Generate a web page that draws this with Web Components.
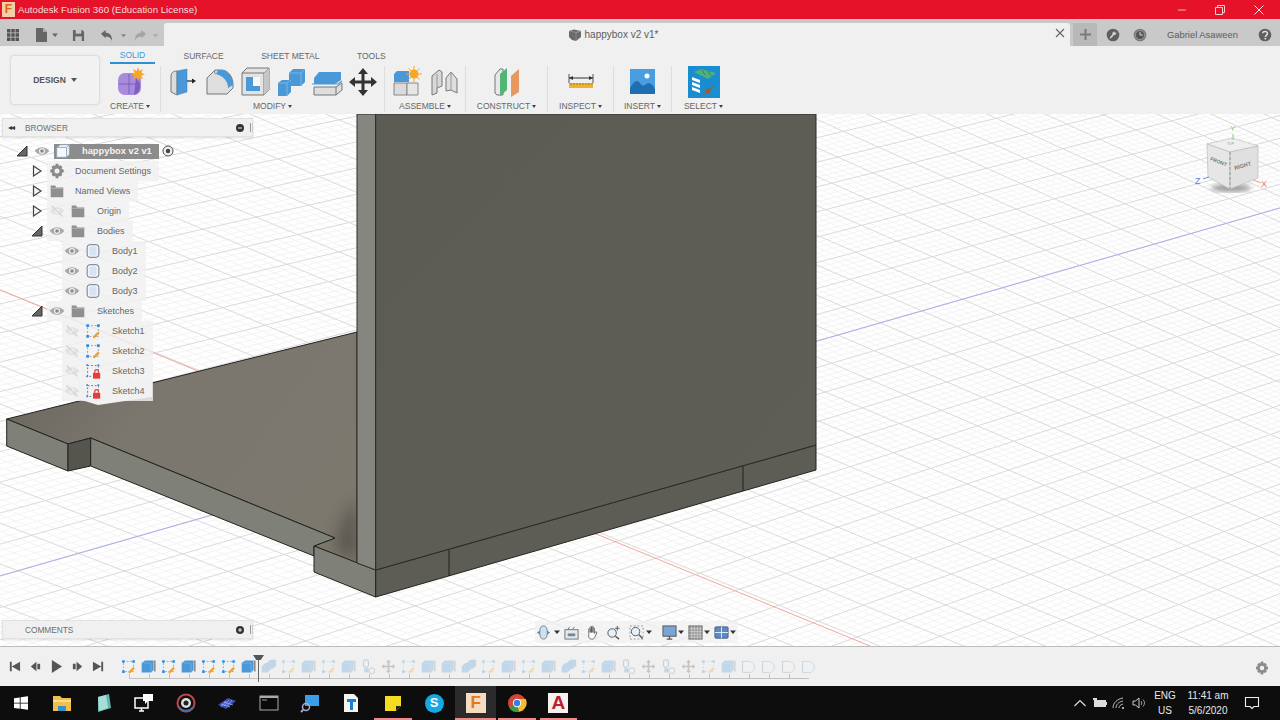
<!DOCTYPE html>
<html>
<head>
<meta charset="utf-8">
<title>Autodesk Fusion 360</title>
<style>
html, body { margin: 0; padding: 0; width: 1280px; height: 720px; overflow: hidden; font-family: "Liberation Sans", Arial, sans-serif; }
body { display: flex; flex-direction: column; }
</style>
</head>
<body>
<title-bar>Autodesk Fusion 360 (Education License)</title-bar>
<app-bar doc="happybox v2 v1*" user="Gabriel Asaween"></app-bar>
<ribbon-bar>
    <tool-group label="CREATE" width="51" pad="10"><ui-icon name="create" size="32"></ui-icon></tool-group>
    <tool-group label="MODIFY" width="224">
        <ui-icon name="press" size="32"></ui-icon><ui-icon name="fillet" size="32"></ui-icon><ui-icon name="shell" size="32"></ui-icon>
        <ui-icon name="combine" size="32"></ui-icon><ui-icon name="split" size="32"></ui-icon><ui-icon name="move" size="32"></ui-icon>
    </tool-group>
    <tool-group label="ASSEMBLE" width="81"><ui-icon name="component" size="32"></ui-icon><ui-icon name="joint" size="32"></ui-icon></tool-group>
    <tool-group label="CONSTRUCT" width="82"><ui-icon name="plane" size="32"></ui-icon></tool-group>
    <tool-group label="INSPECT" width="66"><ui-icon name="measure" size="32"></ui-icon></tool-group>
    <tool-group label="INSERT" width="58"><ui-icon name="picture" size="32"></ui-icon></tool-group>
    <tool-group label="SELECT" width="63" last><ui-icon name="select" size="32"></ui-icon></tool-group>
</ribbon-bar>
<view-port>
    <browser-panel>
        <tree-root>happybox v2 v1</tree-root>
        <tree-row indent="27" toggle="closed" icon="gear" gap="8">Document Settings</tree-row>
        <tree-row indent="27" toggle="closed" icon="folder" gap="8">Named Views</tree-row>
        <tree-row indent="27" toggle="closed" eye="off" icon="folder" gap="9">Origin</tree-row>
        <tree-row indent="27" toggle="open" eye="on" icon="folder" gap="9">Bodies</tree-row>
        <tree-row indent="60" eye="on" icon="body" gap="9">Body1</tree-row>
        <tree-row indent="60" eye="on" icon="body" gap="9">Body2</tree-row>
        <tree-row indent="60" eye="on" icon="body" gap="9">Body3</tree-row>
        <tree-row indent="27" toggle="open" eye="on" icon="folder" gap="9">Sketches</tree-row>
        <tree-row indent="60" eye="off" icon="sketch" gap="9">Sketch1</tree-row>
        <tree-row indent="60" eye="off" icon="sketch" gap="9">Sketch2</tree-row>
        <tree-row indent="60" eye="off" icon="sketchlock" gap="9">Sketch3</tree-row>
        <tree-row indent="60" eye="off" icon="sketchlock" gap="9">Sketch4</tree-row>
    </browser-panel>
    <comments-panel></comments-panel>
    <nav-bar></nav-bar>
    <view-cube></view-cube>
</view-port>
<time-line></time-line>
<task-bar></task-bar>

<script>
// all icons live here, name -> [viewBox size, svg content]
const ICONS = {
    create: [32, `<rect x="4" y="7" width="23" height="22" rx="7" fill="#a88bdc"/><path d="M22 12c4 3 5 8 3 13-1 2-3 3-5 4z" fill="#7d5fc0"/><path d="M5 18h21M15 8v20" stroke="#7a60b8" fill="none"/><path d="M24 1l1.400 4 3.600-2-1.600 3.800L31 8.500l-3.600 1.100 1.600 3.600-3.600-1.800L24 15l-1.400-3.600-3.600 1.800 1.600-3.600L17 8.500l3.600-1.700L19 3l3.600 2z" fill="#f6a628"/>`],
    press: [32, `<path d="M10 5C6 5 4 7 4 10v16l6 3z" fill="#dcdcdc" stroke="#777"/><path d="M10 5l10-2v23l-10 3z" fill="#4a98d8" stroke="#3b7fb8" stroke-width=".5"/><path d="M20 15h6" stroke="#222" stroke-width="1.200"/><path d="M29 15l-4-2.500v5z" fill="#222"/>`],
    fillet: [32, `<path d="M4 12l8-8h6c8 0 12 8 12 14v4l-6 6H4z" fill="#dedede" stroke="#777"/><path d="M15 4h3c8 0 12 8 12 15l-5 3c0-6-4-12-12-14z" fill="#4a98d8"/><path d="M12 4c-1 3 0 4 1 4" stroke="#888" fill="none"/>`],
    shell: [32, `<path d="M3 7l5-5h22v22l-5 5H3z" fill="#e2e2e2" stroke="#777"/><path d="M3 7h22v22M25 7l5-5" fill="none" stroke="#777"/><path d="M7 11h7v9h7v5H7z" fill="#4a98d8"/><path d="M14 11h7v9h-7z" fill="#f6f6f6"/><path d="M25 7l5-5v22l-5 5z" fill="#c6c6c6"/>`],
    combine: [32, `<path d="M3 17l4-3h9v12l-4 4H3z" fill="#4a98d8"/><path d="M14 7l4-4h12v13l-4 4H14z" fill="#4a98d8"/><path d="M14 7h12v13M26 7l4-4" fill="none" stroke="#8cc0ea" stroke-width=".7"/><path d="M3 17h9v13M12 17l4-3" fill="none" stroke="#8cc0ea" stroke-width=".7"/>`],
    split: [32, `<path d="M3 12l5-6h22v8l-6 4H3z" fill="#4a98d8"/><path d="M1 18h26l4-3" fill="none" stroke="#4a98d8" stroke-width="1.200"/><path d="M3 21h22l6-4v7l-6 5H3z" fill="#dedede" stroke="#777"/><path d="M25 21v8" stroke="#777"/>`],
    move: [32, `<path d="M16 2l-5 6h3.500v6.500H8V11l-6 5 6 5v-3.500h6.500V24H11l5 6 5-6h-3.500v-6.500H24V21l6-5-6-5v3.500h-6.500V8H21z" fill="#333"/>`],
    component: [32, `<path d="M3 8l3-3h12v11H3z" fill="#4a98d8"/><path d="M3 17h13v12H3z" fill="#dbdbdb" stroke="#888"/><path d="M16 17h11v12H16z" fill="#e6e6e6" stroke="#888"/><circle cx="23" cy="8" r="4.500" fill="#f6a628"/><path d="M23 0v16M15 8h16M17.500 2.500l11 11M28.500 2.500l-11 11" stroke="#f6a628"/>`],
    joint: [32, `<path d="M5 10l7-6 3 2v14l-5 2v5l-5 2z" fill="#d8d8d8" stroke="#777"/><path d="M19 12l5-6 6 7v14l-6-3-5 1z" fill="#dedede" stroke="#777"/><path d="M10 8v14M24 6v18" stroke="#999"/>`],
    plane: [32, `<path d="M4 9l5-6 3 0v26l-6 0-2-2z" fill="#e8e8e8" stroke="#777"/><path d="M9 8l7-6v22l-7 6z" fill="#53b573"/><path d="M20 10l8-7v23l-8 5z" fill="#e6985e"/>`],
    measure: [32, `<path d="M4 8v9M28 8v9" stroke="#555"/><path d="M4 12h24" stroke="#333"/><path d="M4 12l4-2v4zM28 12l-4-2v4z" fill="#333"/><rect x="4" y="17" width="24" height="5" fill="#f2b02e"/><path d="M6 17v2M9 17v2M12 17v2M15 17v2M18 17v2M21 17v2M24 17v2M27 17v2" stroke="#8a6a10" stroke-width=".7"/>`],
    picture: [32, `<rect x="3" y="3" width="25" height="25" fill="#4a9ee0"/><circle cx="20" cy="10" r="2.500" fill="#fff"/><path d="M3 22c4-7 7-9 10-5 2 3 3 3 5 2 3-3 7-2 10 4v5H3z" fill="#1f6fb0"/>`],
    select: [32, `<rect x="0" y="0" width="32" height="32" fill="#1a8dd0"/><path d="M6 6l7-3 15 4-8 6z" fill="#4fb07a"/><path d="M14 4l3 5M20 5l3 5" stroke="#2a8a58"/><path d="M4 11l8 3v3l-8-3zM4 16l8 3v3l-8-3zM4 21l8 3v3l-8-3z" fill="#fff"/><path d="M15 29l11-9" stroke="#7a6a58" stroke-width="1.500"/><circle cx="20" cy="25" r="2.500" fill="#a05a30"/>`],

    grid3: [14, `<path d="M1 1h3.500v3.500H1zM5.250 1h3.500v3.500h-3.500zM9.500 1H13v3.500H9.500zM1 5.250h3.500v3.500H1zM5.250 5.250h3.500v3.500h-3.500zM9.500 5.250H13v3.500H9.500zM1 9.500h3.500V13H1zM5.250 9.500h3.500V13h-3.500zM9.500 9.500H13V13H9.500z" fill="#555"/>`],
    doc: [14, `<path d="M2 0h7l4 4v10H2z" fill="#666"/><path d="M9 0l4 4H9z" fill="#aaa"/>`],
    save: [14, `<path d="M1 1h10l2 2v10H1z" fill="#666"/><rect x="4" y="1" width="6" height="4" fill="#c9c9c9"/><rect x="3.500" y="8" width="7" height="5" fill="#c9c9c9"/>`],
    undo: [14, `<path d="M1 5l5-4v3c4 0 7 2 7 9-1-3-3-5-7-5v2z" fill="#666"/>`],
    redo: [14, `<path d="M13 5L8 1v3C4 4 1 6 1 13c1-3 3-5 7-5v2z" fill="#a4a4a4"/>`],
    caret: [8, `<path d="M1 2.500h6L4 6z" fill="currentColor"/>`],
    help: [20, `<circle cx="10" cy="10" r="9" fill="#5f5f5f"/><path d="M5 15c3 0 5-3 6-5 2 0 4-1 4-4l-2 1-1-2c-2 0-3 2-3 4-1 2-3 3-4 6z" fill="#d0d0d0"/>`],
    clock: [20, `<circle cx="10" cy="10" r="9" fill="#7a7a7a"/><circle cx="10" cy="10" r="6.500" fill="#555" stroke="#bbb" stroke-width=".8"/><path d="M10 5.500V10h4" stroke="#ddd" stroke-width="1.400" fill="none"/>`],
    question: [20, `<circle cx="10" cy="10" r="9" fill="#5f5f5f"/><path d="M6.500 7.500C7 4 13.500 4 13.500 8c0 2.500-3 2.500-3 5" fill="none" stroke="#ddd" stroke-width="2.200"/><rect x="9.300" y="14" width="2.400" height="2.400" fill="#ddd"/>`],

    eyeon: [20, `<path d="M2 10c4-5.500 12-5.500 16 0-4 5.500-12 5.500-16 0z" fill="#a8a8a8"/><circle cx="10" cy="10" r="3.400" fill="#eee"/><circle cx="10" cy="10" r="2" fill="#8a8a8a"/>`],
    eyeoff: [20, `<path d="M2 10c4-5.500 12-5.500 16 0-4 5.500-12 5.500-16 0z" fill="#e2e2e2"/><circle cx="10" cy="10" r="2.600" fill="#f4f4f4"/><path d="M4 4l12 12" stroke="#d4d4d4" stroke-width="1.500"/>`],
    folder: [20, `<path d="M3 4h5l1 2h8v11H3z" fill="#8f8f8f"/><path d="M3 7h14" stroke="#b5b5b5"/>`],
    gear: [20, `<path d="M8.500 2h3l.5 2.500 2-.9 2 2-1 2 2.500.9v3l-2.500.6 1 2.100-2 2-2-1-.5 2.800h-3L8 15.200l-2 1-2-2 1-2.100L2.500 11.500v-3L5 7.600l-1-2 2-2 2 .9z" fill="#8a8a8a"/><circle cx="10" cy="10" r="2.800" fill="#efefef"/>`],
    body: [20, `<rect x="3.500" y="3" width="13" height="14" rx="3" fill="#f2f5fa" stroke="#5e6a80"/><path d="M6 5h8v10H6z" fill="#d7e3f2"/>`],
    box: [20, `<path d="M3 6l4-3h10v11l-3 3H3z" fill="#f5f8fc" stroke="#8aa0b8"/><path d="M3 6h11v11M14 6l3-3" fill="none" stroke="#8aa0b8"/>`],
    sketch: [20, `<path d="M4 4h12v12H4z" fill="none" stroke="#8a96a4" stroke-dasharray="2 2"/><path d="M2.500 2.500h3v3h-3zM14.500 2.500h3v3h-3zM2.500 14.500h3v3h-3z" fill="#2f8fe2"/><path d="M10.500 17.500l6-6" stroke="#f0a02c" stroke-width="2.600"/>`],
    sketchlock: [20, `<path d="M4 4h12v12H4z" fill="none" stroke="#66707c" stroke-dasharray="2 2"/><path d="M2.500 2.500h2v2h-2zM15 2.500h2v2h-2zM2.500 15h2v2h-2z" fill="#2f8fe2"/><rect x="10" y="12" width="8" height="6.500" fill="#e23c3c"/><path d="M12 12v-2c0-2 4-2 4 0v2" fill="none" stroke="#e23c3c" stroke-width="1.400"/>`],

    tlbox: [20, `<path d="M2 6l4-3h10v11l-3 3H2z" fill="#4a98d8"/><path d="M2 6h11v11" fill="none" stroke="#8cc0ea" stroke-width=".6"/><path d="M17.500 3v13" stroke="#555" stroke-width="1.200"/>`],
    tldbl: [20, `<path d="M2 10l4-4h7v7l-4 4H2z" fill="#4a98d8"/><path d="M8 6l4-4h7v7l-4 4H8z" fill="#4a98d8"/>`],
    tljoint: [20, `<rect x="4" y="2" width="6" height="9" rx="3" fill="none" stroke="#4a78a8" stroke-width="1.200"/><path d="M5 12h5v5H5z" fill="#4a98d8"/><circle cx="14" cy="15" r="3.500" fill="none" stroke="#666"/>`],
    tlmove: [20, `<path d="M10 2l-3 3h2v4H5V7l-3 3 3 3v-2h4v4H7l3 3 3-3h-2v-4h4v2l3-3-3-3v2h-4V5h2z" fill="#555"/>`],
    tlfillet: [20, `<path d="M3 4h7c4 0 7 4 7 8v1l-4 4H3z" fill="#f0f5fa" stroke="#6c8aa8"/><path d="M3 4v13" stroke="#6c8aa8"/>`],

    start: [14, `<path d="M0 2.200L5.800 1.400V6.700H0zM6.600 1.300L14 .3V6.700H6.600zM0 7.400h5.800v5.300L0 11.900zM6.600 7.400H14v6.400l-7.400-1z" fill="#fff"/>`],
    folderapp: [20, `<path d="M1 3h7l2 2h9v13H1z" fill="#f2c04a"/><path d="M1 7h18v2H1z" fill="#fbe08c"/><path d="M6 13h8v5H6z" fill="#3a8fd0"/>`],
    notes: [20, `<path d="M5 4l11-3 2 14-13 4z" fill="#5fb8b0"/><path d="M5 4l8-2 2 13-9 3z" fill="#a8dcd8"/>`],
    chat: [20, `<path d="M1 5h13v10H1z" fill="none" stroke="#fff" stroke-width="1.500"/><path d="M5 18h5M7.500 15v3" stroke="#fff" stroke-width="1.500"/><path d="M9 1h10v7h-5l-3 3V8H9z" fill="#fff"/>`],
    disc: [20, `<circle cx="10" cy="10" r="8.500" fill="none" stroke="#c04848" stroke-width="2"/><path d="M3 14a8.500 8.500 0 0 0 14 0" fill="none" stroke="#3a70b0" stroke-width="2"/><circle cx="10" cy="10" r="5" fill="#ddd"/><circle cx="10" cy="10" r="2.500" fill="#222"/>`],
    plates: [20, `<path d="M1 12l10-7 8 3-10 8z" fill="#3a4fb8"/><path d="M4 11l9 3M7 9l9 3M9 8l-5 6M12 7l-5 6M15 7l-5 6" stroke="#a8b4f0" stroke-width=".7"/>`],
    term: [20, `<rect x="1" y="3" width="18" height="14" fill="#0a0a0a" stroke="#aaa"/><rect x="1" y="3" width="18" height="2" fill="#aaa"/><path d="M3 7h5" stroke="#999"/>`],
    monitor: [20, `<rect x="5" y="2" width="14" height="11" fill="#3a9ee8"/><circle cx="6" cy="14" r="3.500" fill="none" stroke="#aac" stroke-width="1.500"/><path d="M3 17l-2 2" stroke="#aac" stroke-width="2"/>`],
    tdoc: [20, `<path d="M3 1h10l4 4v14H3z" fill="#f4f4f4"/><path d="M6 6h9v3h-3v8H9V9H6z" fill="#1f7ed0"/>`],
    sticky: [20, `<path d="M2 3h16v10l-5 5H2z" fill="#f5dc20"/><path d="M13 18v-5h5z" fill="#222"/>`],
    chrome: [20, `<circle cx="10" cy="10" r="9" fill="#d64436"/><path d="M10 10L2.200 14.500A9 9 0 0 0 12 18.800z" fill="#3a9a4a"/><path d="M10 10l2 8.800A9 9 0 0 0 18.800 6H10z" fill="#f2c02e"/><circle cx="10" cy="10" r="4.200" fill="#fff"/><circle cx="10" cy="10" r="3.200" fill="#3a7ee0"/>`],
    chevron: [14, `<path d="M1.500 10l5.500-5.500L12.500 10" fill="none" stroke="#ddd" stroke-width="1.200"/>`],
    battery: [14, `<rect x="1" y="4" width="12" height="7" fill="#ddd"/><rect x="13" y="6" width="1" height="3" fill="#ddd"/><path d="M0 2h4v2H0z" fill="#ddd"/>`],
    wifi: [14, `<path d="M1 12C1 7 5 3 11 2M4 12c0-3 2-6 7-7M7 12c0-2 1-3 4-4" fill="none" stroke="#bbb"/><circle cx="11" cy="12" r="1" fill="#ddd"/>`],
    speaker: [14, `<path d="M1 5h2.500L7 2v10L3.500 9H1z" fill="none" stroke="#ccc"/><path d="M9 5c1 1 1 3 0 4M11 3.500c2 2 2 5 0 7" fill="none" stroke="#999"/>`],
    bubble: [16, `<path d="M1.500 2.500h13v9H10l-2 2-2-2H1.500z" fill="none" stroke="#eee" stroke-width="1.100"/>`],

    orbit: [16, `<path d="M8 1c3 0 4 3 4 7s-1 7-4 7-4-3-4-7 1-7 4-7z" fill="#cfe0ee" stroke="#6a7f92"/><path d="M1 8l3-2v4zM15 8l-3-2v4z" fill="#6a7f92"/>`],
    lookat: [16, `<rect x="1" y="5" width="14" height="10" fill="#e8e8e8" stroke="#6a7280"/><rect x="4" y="9" width="8" height="3" fill="#6a8aa8"/><path d="M4 5l2-3M9 5l2-3" stroke="#6a7280"/>`],
    pan: [16, `<path d="M4 9V4.500c0-1 1.500-1 1.500 0V8 2.500c0-1 1.500-1 1.500 0V8 2c0-1 1.500-1 1.500 0v6-4.500c0-1 1.500-1 1.500 0V9l1-1.500c.8-1 2 0 1.500 1l-2 4.500c-.6 1.500-1.500 2-3 2H7c-2 0-3-1-3-3z" fill="#fff" stroke="#555" stroke-width=".9"/>`],
    zoomin: [16, `<circle cx="6.500" cy="8.500" r="4.500" fill="#e6f0f8" stroke="#555"/><path d="M10 12l4 3" stroke="#555" stroke-width="1.600"/><path d="M12 1v5M9.500 3.500h5" stroke="#555"/>`],
    zoomfit: [16, `<path d="M1 1h14v14H1z" fill="none" stroke="#8a9aa8" stroke-dasharray="2 2"/><circle cx="7" cy="7" r="4.500" fill="#e6f0f8" stroke="#555"/><path d="M10.500 10.500l4 4" stroke="#555" stroke-width="1.600"/>`],
    display: [16, `<rect x="1" y="1" width="14" height="11" fill="#7aa4d4" stroke="#555"/><path d="M5 15h6M8 12v3" stroke="#555" stroke-width="1.400"/>`],
    gridview: [16, `<rect x="1" y="1" width="14" height="14" fill="#9a9a9a" stroke="#666"/><path d="M4 1v14M7 1v14M10 1v14M13 1v14M1 4h14M1 7h14M1 10h14M1 13h14" stroke="#ddd" stroke-width=".6"/>`],
    viewports: [16, `<rect x="1" y="2" width="14" height="12" rx="1" fill="#5a8ac8" stroke="#4a5a78"/><path d="M8 2v12M1 8h14" stroke="#e8eef6"/>`],

    tostart: [14, `<path d="M2 2h2v10H2zM13 2v10L4 7z" fill="#555"/>`],
    stepback: [14, `<path d="M8 2v10L2 7zM9 4h3v6H9z" fill="#555"/>`],
    play: [14, `<path d="M2 0l11 7-11 7z" fill="#555"/>`],
    stepfwd: [14, `<path d="M6 2v10l6-5zM2 4h3v6H2z" fill="#555"/>`],
    toend: [14, `<path d="M10 2h2v10h-2zM1 2v10l9-5z" fill="#555"/>`]
};

class UiIcon extends HTMLElement {
    constructor() {
        super();
        this.attachShadow({ mode: 'open' });
    }
    connectedCallback() {
        const size = this.getAttribute('size') || 16;
        const icon = ICONS[this.getAttribute('name')];
        this.shadowRoot.innerHTML = `
        <style>:host { display: inline-flex; flex: none; width: ${size}px; height: ${size}px; }
        svg { display: block; width: 100%; height: 100%; }</style>
        <svg viewBox="0 0 ${icon[0]} ${icon[0]}">${icon[1]}</svg>`;
    }
}
customElements.define('ui-icon', UiIcon);

class TitleBar extends HTMLElement {
    constructor() {
        super();
        this.attachShadow({ mode: 'open' });
    }
    connectedCallback() {
        this.shadowRoot.innerHTML = `
        <style>
        :host { display: flex; flex: none; height: 19px; background: #e6122a; color: #f6dcdc; font-size: 9.700px; align-items: center; }
        .logo { width: 13px; height: 15px; margin: 0 3px 0 2px; background: #f2cfa6; color: #d9661a; font: bold 12px/15px "Liberation Sans", sans-serif; text-align: center; }
        .controls { margin-left: auto; margin-right: 2px; display: flex; }
        .btn { width: 38.500px; display: flex; justify-content: center; align-items: center; height: 19px; }
        svg { width: 12px; height: 12px; }
        </style>
        <span class="logo">F</span><slot></slot>
        <div class="controls">
            <div class="btn"><svg viewBox="0 0 12 12"><path d="M2 6h8" stroke="#f4b4b4" stroke-width="1"/></svg></div>
            <div class="btn"><svg viewBox="0 0 12 12"><path d="M1.500 3.500h7v7h-7zM3.500 3.500v-2h7v7h-2" fill="none" stroke="#f6d0d0"/></svg></div>
            <div class="btn"><svg viewBox="0 0 12 12"><path d="M1.500 1.500l9 9M10.500 1.500l-9 9" stroke="#fbe8e8" stroke-width="1"/></svg></div>
        </div>`;
    }
}
customElements.define('title-bar', TitleBar);

class AppBar extends HTMLElement {
    constructor() {
        super();
        this.attachShadow({ mode: 'open' });
    }
    getstyles() {
        return `:host { display: flex; flex: none; height: 27px; padding-top: 4px; box-sizing: border-box; background: #c9c9c9; color: #666; font-size: 10px; }
.left { width: 164px; display: flex; align-items: center; color: #666; }
.left ui-icon { margin-top: 1px; }
.tab { flex: 1; background: #f0f0f0; border-radius: 3px 3px 0 0; display: flex; align-items: center; justify-content: center; position: relative; color: #5c5c5c; font-size: 10px; padding-right: 8px; gap: 3px; }
.close { position: absolute; right: 5px; top: 5px; width: 10px; height: 10px; }
.right { width: 210px; display: flex; align-items: center; }
.plus { width: 24px; height: 23px; margin-left: 3px; background: #b9b9b9; display: flex; align-items: center; justify-content: center; }
.user { margin: 0 0 0 20px; width: 85px; color: #5c5c5c; white-space: nowrap; font-size: 9.400px; }`;
    }
    connectedCallback() {
        const gap = w => `<span style="width:${w}px;flex:none"></span>`;
        this.shadowRoot.innerHTML = `
        <style>${this.getstyles()}</style>
        <div class="left">
            ${gap(6)}<ui-icon name="grid3" size="14"></ui-icon>
            ${gap(14)}<ui-icon name="doc" size="14"></ui-icon>${gap(3)}<ui-icon name="caret" size="8"></ui-icon>
            ${gap(13)}<ui-icon name="save" size="13"></ui-icon>
            ${gap(15)}<ui-icon name="undo" size="13"></ui-icon>${gap(7)}<ui-icon name="caret" size="7" style="color:#888"></ui-icon>
            ${gap(7)}<ui-icon name="redo" size="13"></ui-icon>${gap(5)}<ui-icon name="caret" size="7" style="color:#aaa"></ui-icon>
        </div>
        <div class="tab">
            <svg width="14" height="14" viewBox="0 0 14 14"><path d="M1 3l5-1.500L13 3v6l-5 4-4-1-3-3z" fill="#6a6a6a"/><path d="M1 3l7 1.500L13 3 8 4.500V13" fill="none" stroke="#aaa" stroke-width=".5"/></svg>
            <span>${this.getAttribute('doc')}</span>
            <svg class="close" viewBox="0 0 10 10"><path d="M1 1l8 8M9 1l-8 8" stroke="#666" stroke-width="1.100"/></svg>
        </div>
        <div class="right">
            <div class="plus"><svg width="13" height="13" viewBox="0 0 13 13"><path d="M6.500 1v11M1 6.500h11" stroke="#7a7a7a" stroke-width="2"/></svg></div>
            ${gap(9)}<ui-icon name="help" size="14"></ui-icon>
            ${gap(13)}<ui-icon name="clock" size="14"></ui-icon>
            <span class="user">${this.getAttribute('user')}</span>
            ${gap(6)}<ui-icon name="question" size="14"></ui-icon>
        </div>`;
    }
}
customElements.define('app-bar', AppBar);

class RibbonBar extends HTMLElement {
    constructor() {
        super();
        this.attachShadow({ mode: 'open' });
    }
    getstyles() {
        return `:host { display: flex; flex: none; height: 68px; background: #f0f0f0; color: #666; font-size: 8.500px; box-sizing: border-box; padding-left: 10px; }
.design { width: 90px; height: 50px; margin-top: 9px; margin-right: 10px; box-sizing: border-box; border: 1px solid #dedede; border-radius: 4px; background: #f2f2f2; display: flex; align-items: center; justify-content: center; gap: 5px; font-weight: bold; color: #555; box-shadow: 0 0 2px #ddd; }
.tri { width: 0; height: 0; border: 3px solid transparent; border-top: 4px solid #555; border-bottom: 0; }
.col { display: flex; flex-direction: column; }
.tabs { display: flex; height: 18px; align-items: center; gap: 37.500px; padding-top: 1px; box-sizing: border-box; }
.tabs span { line-height: 16px; position: relative; white-space: nowrap; }
.tabs .on { color: #3a9ad8; width: 45px; text-align: center; margin-right: -9px; border-bottom: 2px solid #2f8fd0; height: 15px; }
.groups { display: flex; margin-top: 2px; }`;
    }
    connectedCallback() {
        this.shadowRoot.innerHTML = `
        <style>${this.getstyles()}</style>
        <div class="design">DESIGN <span class="tri"></span></div>
        <div class="col">
            <div class="tabs"><span class="on">SOLID</span><span>SURFACE</span><span>SHEET METAL</span><span>TOOLS</span></div>
            <div class="groups"><slot></slot></div>
        </div>`;
    }
}
customElements.define('ribbon-bar', RibbonBar);

class ToolGroup extends HTMLElement {
    constructor() {
        super();
        this.attachShadow({ mode: 'open' });
    }
    connectedCallback() {
        const last = this.hasAttribute('last');
        this.shadowRoot.innerHTML = `
        <style>
        :host { display: flex; flex: none; flex-direction: column; align-items: center; box-sizing: border-box; width: ${this.getAttribute('width')}px; padding-right: ${this.getAttribute('pad') || 0}px; height: 46px; position: relative; ${last ? '' : 'border-right: 1px solid #dddddd;'} }
        .icons { display: flex; height: 32px; gap: 4px; justify-content: center; }
        .label { display: flex; align-items: center; gap: 2px; line-height: 12px; margin-top: 2px; white-space: nowrap; color: #666; }
        .tri { width: 0; height: 0; border: 2.500px solid transparent; border-top: 3.500px solid #444; border-bottom: 0; }
        </style>
        <div class="icons"><slot></slot></div>
        <div class="label">${this.getAttribute('label')}<span class="tri"></span></div>`;
    }
}
customElements.define('tool-group', ToolGroup);

class ViewPort extends HTMLElement {
    constructor() {
        super();
        this.attachShadow({ mode: 'open' });
    }
    // perspective grid, lines run to the two vanishing points of the ground plane
    gridPaths() {
        const ox = 413, oy = 457;
        const lineSet = (axisSlope, axisVp, otherVp, step, from, to) => {
            const major = [], minor = [];
            const depth = axisVp.x - ox;
            for (let i = from * 5; i <= to * 5; i++) {
                const d = (i / 5) * step;
                const off = d / (1 + d / depth);
                const px = ox + off, py = oy + off * axisSlope;
                const x2 = px + (px - otherVp.x) * 2, y2 = py + (py - otherVp.y) * 2;
                const seg = `M${otherVp.x} ${otherVp.y}L${x2.toFixed(1)} ${y2.toFixed(1)}`;
                (i % 5 === 0 ? major : minor).push(seg);
            }
            return { major: major.join(''), minor: minor.join('') };
        };
        const vpBlue = { x: 5000, y: 576 - 0.2875 * 5000 };
        const vpRed = { x: 12000, y: 290 + 0.405 * 12000 };
        const a = lineSet(0.405, vpRed, vpBlue, 42, -22, 22);
        const b = lineSet(-0.2875, vpBlue, vpRed, 52, -14, 34);
        return { major: a.major + b.major, minor: a.minor + b.minor };
    }
    getstyles() {
        return `:host { display: block; flex: none; height: 532px; position: relative; overflow: hidden; background: #fff; }
svg.scene { display: block; width: 1280px; height: 532px; }`;
    }
    connectedCallback() {
        const grid = this.gridPaths();
        this.shadowRoot.innerHTML = `
        <style>${this.getstyles()}</style>
        <svg class="scene" viewBox="0 114 1280 532">
            <defs>
                <linearGradient id="floor" x1="0" y1="0" x2="1" y2="0.500">
                    <stop offset="0" stop-color="#66635b"/><stop offset=".45" stop-color="#7b776e"/><stop offset="1" stop-color="#7d786e"/>
                </linearGradient>
                <linearGradient id="wall" x1="0" y1="0" x2="1" y2="1">
                    <stop offset="0" stop-color="#5c5b54"/><stop offset="1" stop-color="#5e5d56"/>
                </linearGradient>
                <filter id="soft" x="-50%" y="-50%" width="200%" height="200%"><feGaussianBlur stdDeviation="8"/></filter>
                <clipPath id="floorclip"><path d="M6.700 419L357 332V563L314 546L335 538L90.700 438L68 444Z"/></clipPath>
            </defs>
            <path d="${grid.minor}" stroke="#f4f4f4" fill="none"/>
            <path d="${grid.major}" stroke="#dadada" fill="none"/>
            <path d="M0 290L870 646" stroke="#f0a89c" fill="none"/>
            <path d="M0 576L1280 208" stroke="#aab0ea" fill="none"/>

            <g stroke="#23231e" stroke-width="1" stroke-linejoin="round">
                <path d="M6.700 419L357 332V563L314 546L335 538L90.700 438L68 444Z" fill="url(#floor)"/>
                <path d="M6.700 419L68 444V471L6.700 446Z" fill="#7f8179"/>
                <path d="M68 444L90.700 438V466L68 471Z" fill="#55544e"/>
                <path d="M90.700 438L335 538L314 546V556L90.700 466Z" fill="#7f8179"/>
                <path d="M314 546L375.700 570V597L314 572Z" fill="#7f8179"/>
                <path d="M375.700 570L816 445V470L375.700 597Z" fill="#5d5c55"/>
                <path d="M449 549V576M743 466V491" fill="none"/>
            </g>
            <g clip-path="url(#floorclip)">
                <path d="M345 515L357 500V563L335 548Z" fill="#3e3d38" filter="url(#soft)" opacity=".6"/>
            </g>
            <path d="M357 114H375.700V570L357 563Z" fill="#84867f" stroke="#2c2c27"/>
            <path d="M375.700 114H816V445L375.700 570Z" fill="url(#wall)" stroke="#2c2c27"/>
            <path d="M78 399L98 405L152 397V380H78Z" fill="#f2f2f2"/>
        </svg>
        <slot></slot>`;
    }
}
customElements.define('view-port', ViewPort);

const PANEL_HEAD = `.head { height: 19px; box-sizing: border-box; width: 251px; background: #f0f0f0; border: 1px solid #e2e2e2; box-shadow: 0 1px 2px rgba(0,0,0,.12); display: flex; align-items: center; color: #6e6e6e; font-size: 8.300px; padding-left: 5px; }
.arrows { width: 17px; color: #333; font-size: 8px; letter-spacing: -1px; }
.sign { margin-left: auto; width: 8px; height: 8px; }
.grip { width: 1px; height: 9px; background: #999; margin: 0 1px 0 6px; box-shadow: 2px 0 0 #ccc; }`;

class BrowserPanel extends HTMLElement {
    constructor() {
        super();
        this.attachShadow({ mode: 'open' });
    }
    connectedCallback() {
        this.shadowRoot.innerHTML = `
        <style>
        :host { position: absolute; left: 2px; top: 4px; display: block; }
        ${PANEL_HEAD}
        .tree { margin-top: 4px; display: flex; flex-direction: column; }
        </style>
        <div class="head"><span class="arrows">◂◂</span>BROWSER
            <svg class="sign" viewBox="0 0 8 8"><circle cx="4" cy="4" r="4" fill="#333"/><path d="M2 4h4" stroke="#eee"/></svg><span class="grip"></span></div>
        <div class="tree"><slot></slot></div>`;
    }
}
customElements.define('browser-panel', BrowserPanel);

class CommentsPanel extends HTMLElement {
    constructor() {
        super();
        this.attachShadow({ mode: 'open' });
    }
    connectedCallback() {
        this.shadowRoot.innerHTML = `
        <style>
        :host { position: absolute; left: 2px; bottom: 7px; display: block; }
        ${PANEL_HEAD}
        .head { padding-left: 22px; }
        </style>
        <div class="head">COMMENTS
            <svg class="sign" viewBox="0 0 8 8"><circle cx="4" cy="4" r="4" fill="#333"/><path d="M2 4h4M4 2v4" stroke="#eee"/></svg><span class="grip"></span></div>`;
    }
}
customElements.define('comments-panel', CommentsPanel);

const ROW_TRI = {
    open: `<svg width="12" height="12" viewBox="0 0 12 12"><path d="M1 11L11 1v10z" fill="#666" stroke="#333"/></svg>`,
    closed: `<svg width="12" height="12" viewBox="0 0 12 12"><path d="M2.500 1l7.500 5-7.500 5z" fill="#f4f4f4" stroke="#444" stroke-width="1.200"/></svg>`
};

class TreeRoot extends HTMLElement {
    constructor() {
        super();
        this.attachShadow({ mode: 'open' });
    }
    connectedCallback() {
        this.shadowRoot.innerHTML = `
        <style>
        :host { display: flex; height: 20px; align-items: center; padding-left: 12px; }
        .tri { width: 16px; display: flex; justify-content: center; }
        .eye { margin: 0 3px; }
        .cell { width: 105px; height: 15px; background: #8c8c8c; display: flex; align-items: center; color: #f4f4f4; font-size: 9.300px; font-weight: bold; }
        .cell ui-icon { margin-right: 10px; }
        .radio { margin-left: 3px; }
        </style>
        <span class="tri">${ROW_TRI.open}</span>
        <ui-icon class="eye" name="eyeon" size="18"></ui-icon>
        <div class="cell"><ui-icon name="box" size="18"></ui-icon><slot></slot></div>
        <svg class="radio" width="12" height="12" viewBox="0 0 12 12"><circle cx="6" cy="6" r="5" fill="#eee" stroke="#555"/><circle cx="6" cy="6" r="2.200" fill="#444"/></svg>`;
    }
}
customElements.define('tree-root', TreeRoot);

class TreeRow extends HTMLElement {
    constructor() {
        super();
        this.attachShadow({ mode: 'open' });
    }
    connectedCallback() {
        const toggle = this.getAttribute('toggle');
        const eye = this.getAttribute('eye');
        this.shadowRoot.innerHTML = `
        <style>
        :host { display: flex; height: 20px; align-items: center; padding-left: ${this.getAttribute('indent')}px; color: #666; font-size: 9px; white-space: nowrap; }
        .tri { width: 16px; margin-right: 2px; display: flex; justify-content: center; }
        .cell { display: flex; align-items: center; height: 20px; background: rgba(240,240,240,.82); padding-right: 8px; }
        .slotted { margin-left: ${this.getAttribute('gap') || 7}px; }
        ui-icon { margin: 0 1px; }
        </style>
        ${toggle ? `<span class="tri">${ROW_TRI[toggle]}</span>` : ''}
        <div class="cell">
            ${eye ? `<ui-icon name="eye${eye}" size="18"></ui-icon><span style="width:1px"></span>` : ''}
            <ui-icon name="${this.getAttribute('icon')}" size="18"></ui-icon>
            <span class="slotted"><slot></slot></span>
        </div>`;
    }
}
customElements.define('tree-row', TreeRow);

class NavBar extends HTMLElement {
    constructor() {
        super();
        this.attachShadow({ mode: 'open' });
    }
    connectedCallback() {
        // caret < 0 means no caret, otherwise it is the gap in front of it
        const item = (name, gap, caret) => `<ui-icon name="${name}" size="15" style="margin-left:${gap}px"></ui-icon>` +
            (caret >= 0 ? `<ui-icon name="caret" size="8" style="color:#333;margin-left:${caret}px"></ui-icon>` : '');
        this.shadowRoot.innerHTML = `
        <style>
        :host { position: absolute; left: 535px; bottom: 3px; height: 22px; width: 203px; display: flex; align-items: center; background: rgba(240,240,240,.75); box-sizing: border-box; padding-left: 1px; }
        </style>
        ${item('orbit', 0, 2)}${item('lookat', 2.5, -1)}${item('pan', 6, -1)}${item('zoomin', 6, -1)}
        ${item('zoomfit', 8, 1.5)}${item('display', 9, 0)}${item('gridview', 3, 0)}${item('viewports', 2.5, 0)}`;
    }
}
customElements.define('nav-bar', NavBar);

class ViewCube extends HTMLElement {
    constructor() {
        super();
        this.attachShadow({ mode: 'open' });
    }
    connectedCallback() {
        this.shadowRoot.innerHTML = `
        <style>
        :host { position: absolute; right: 0; top: 6px; width: 85px; height: 80px; display: block; }
        svg { display: block; }
        text { font-family: "Liberation Sans", sans-serif; }
        </style>
        <svg width="85" height="80" viewBox="0 0 85 80">
            <defs><filter id="blur"><feGaussianBlur stdDeviation="2.500"/></filter></defs>
            <ellipse cx="36" cy="68" rx="20" ry="4" fill="#999" filter="url(#blur)"/>
            <path d="M12 24L38 18L63 26L35 32Z" fill="#efefef" stroke="#aaa" stroke-dasharray="2 1" stroke-width=".7"/>
            <path d="M12 24L35 32V69L13 57Z" fill="#e6e6e6" stroke="#bbb" stroke-width=".7"/>
            <path d="M35 32L63 26V58L35 69Z" fill="#e0e0e0" stroke="#bbb" stroke-width=".7"/>
            <path d="M35 32V69" stroke="#888" stroke-width=".8" stroke-dasharray="3 2"/>
            <text transform="translate(15 40) rotate(22)" font-size="5" font-weight="bold" fill="#777">FRONT</text>
            <text transform="translate(40 50) rotate(-17)" font-size="5.500" font-weight="bold" fill="#777">RIGHT</text>
            <text transform="translate(32 25) rotate(-2)" font-size="3.500" fill="#888">TOP</text>
            <path d="M38 14V20" stroke="#7cd08c"/>
            <text x="35" y="11" font-size="8" fill="#7cd08c">Y</text>
            <path d="M8 59L14 57" stroke="#7a8ce0"/>
            <text x="0" y="64" font-size="9" fill="#6a7ce0">Z</text>
            <path d="M58 60L66 63" stroke="#f0a0a0"/>
            <text x="66" y="67" font-size="9" fill="#ee7878">X</text>
        </svg>`;
    }
}
customElements.define('view-cube', ViewCube);

class TimeLine extends HTMLElement {
    constructor() {
        super();
        this.attachShadow({ mode: 'open' });
    }
    getstyles() {
        return `:host { display: flex; flex: none; height: 40px; box-sizing: border-box; background: #f0f0f0; border-top: 1px solid #bdbdbd; position: relative; align-items: flex-start; }
.controls { display: flex; align-items: center; width: 118px; height: 40px; padding: 0 0 2px 8px; box-sizing: border-box; gap: 8px; }
.track { position: relative; width: 700px; height: 38px; }
.icons { display: flex; padding-top: 11px; }
.item { width: 20px; height: 18px; display: flex; justify-content: center; }
.item.off { opacity: .28; }
.ruler { position: absolute; left: 11px; top: 25px; width: 680px; height: 6px; border-bottom: 1px solid #c2c2c2; background: repeating-linear-gradient(90deg, #c2c2c2 0 1px, transparent 1px 20px) 0 2px / 681px 4px no-repeat; }
.playhead { position: absolute; left: 140px; top: 8px; width: 1px; height: 27px; background: #666; }
.playhead::before { content: ''; position: absolute; left: -5px; top: 0; width: 11px; height: 5px; background: #555; clip-path: polygon(0 0, 100% 0, 70% 100%, 30% 100%); }
.gear { position: absolute; right: 10px; top: 13px; }`;
    }
    connectedCallback() {
        const done = ['sketch', 'tlbox', 'sketch', 'tlbox', 'sketch', 'sketch', 'tlbox'];
        const rest = ['tldbl', 'sketch', 'tlbox', 'sketch', 'tlbox', 'tljoint', 'tlmove', 'sketch', 'tlbox', 'tlbox', 'tldbl', 'sketch', 'tlbox', 'sketch', 'tlbox', 'tldbl', 'sketch', 'tlbox', 'tljoint', 'tlmove', 'tljoint', 'tlmove', 'sketch', 'tlbox', 'tlfillet', 'tlfillet', 'tlfillet', 'tlfillet'];
        const cell = (name, off) => `<span class="item${off ? ' off' : ''}"><ui-icon name="${name}" size="17"></ui-icon></span>`;
        this.shadowRoot.innerHTML = `
        <style>${this.getstyles()}</style>
        <div class="controls">
            <ui-icon name="tostart" size="13"></ui-icon><ui-icon name="stepback" size="13"></ui-icon><ui-icon name="play" size="13"></ui-icon><ui-icon name="stepfwd" size="13"></ui-icon><ui-icon name="toend" size="13"></ui-icon>
        </div>
        <div class="track">
            <div class="icons">${done.map(n => cell(n, false)).join('')}${rest.map(n => cell(n, true)).join('')}</div>
            <div class="ruler"></div>
            <div class="playhead"></div>
        </div>
        <ui-icon class="gear" name="gear" size="16"></ui-icon>`;
    }
}
customElements.define('time-line', TimeLine);

class TaskBar extends HTMLElement {
    constructor() {
        super();
        this.attachShadow({ mode: 'open' });
    }
    getstyles() {
        return `:host { display: flex; flex: none; height: 34px; background: #0d0d0d; color: #e8e8e8; font-size: 10px; align-items: stretch; }
.apps { display: flex; padding-left: 0; }
.app { width: 41.400px; display: flex; align-items: center; justify-content: center; position: relative; }
.app.start { width: 41px; }
.app.on::after { content: ''; position: absolute; left: 2px; right: 2px; bottom: 0; height: 2px; background: #ef8a8a; }
.app.active { background: #2b2b2b; }
.app.active::after { left: 0; right: 0; }
.square { width: 20px; height: 20px; display: flex; align-items: center; justify-content: center; font: bold 17px/20px "Liberation Sans", sans-serif; }
.fusion { background: #f4dcc0; color: #e07a20; }
.acad { background: #f6f0f0; color: #b8202c; font-size: 19px; }
.skype { width: 19px; height: 19px; border-radius: 50%; background: #16a8e4; color: #fff; font-size: 13px; }
.tray { margin-left: auto; display: flex; align-items: center; }
.tray ui-icon { margin-right: 5.700px; }
.tray ui-icon:nth-of-type(4) { margin-right: 0; }
.lang, .clock { display: flex; flex-direction: column; align-items: center; line-height: 15px; }
.lang { width: 30px; margin-left: 4px; }
.clock { width: 56px; }
.bubble { width: 32px; margin-right: 12px; display: flex; justify-content: center; }
.bubble ui-icon { margin: 0; }`;
    }
    connectedCallback() {
        const app = (name, cls) => `<div class="app ${cls || ''}"><ui-icon name="${name}" size="${name === 'start' ? 14 : 20}"></ui-icon></div>`;
        this.shadowRoot.innerHTML = `
        <style>${this.getstyles()}</style>
        <div class="apps">
            ${app('start', 'start')}${app('folderapp')}${app('notes')}${app('chat')}${app('disc')}${app('plates')}${app('term')}${app('monitor')}${app('tdoc')}${app('sticky', 'on')}
            <div class="app"><span class="square skype">S</span></div>
            <div class="app on active"><span class="square fusion">F</span></div>
            ${app('chrome', 'on')}
            <div class="app on"><span class="square acad">A</span></div>
        </div>
        <div class="tray">
            <ui-icon name="chevron" size="14"></ui-icon><ui-icon name="battery" size="14"></ui-icon><ui-icon name="wifi" size="14"></ui-icon><ui-icon name="speaker" size="14"></ui-icon>
            <div class="lang"><span>ENG</span><span>US</span></div>
            <div class="clock"><span>11:41 am</span><span>5/6/2020</span></div>
            <div class="bubble"><ui-icon name="bubble" size="16"></ui-icon></div>
        </div>`;
    }
}
customElements.define('task-bar', TaskBar);
</script>
</body>
</html>
